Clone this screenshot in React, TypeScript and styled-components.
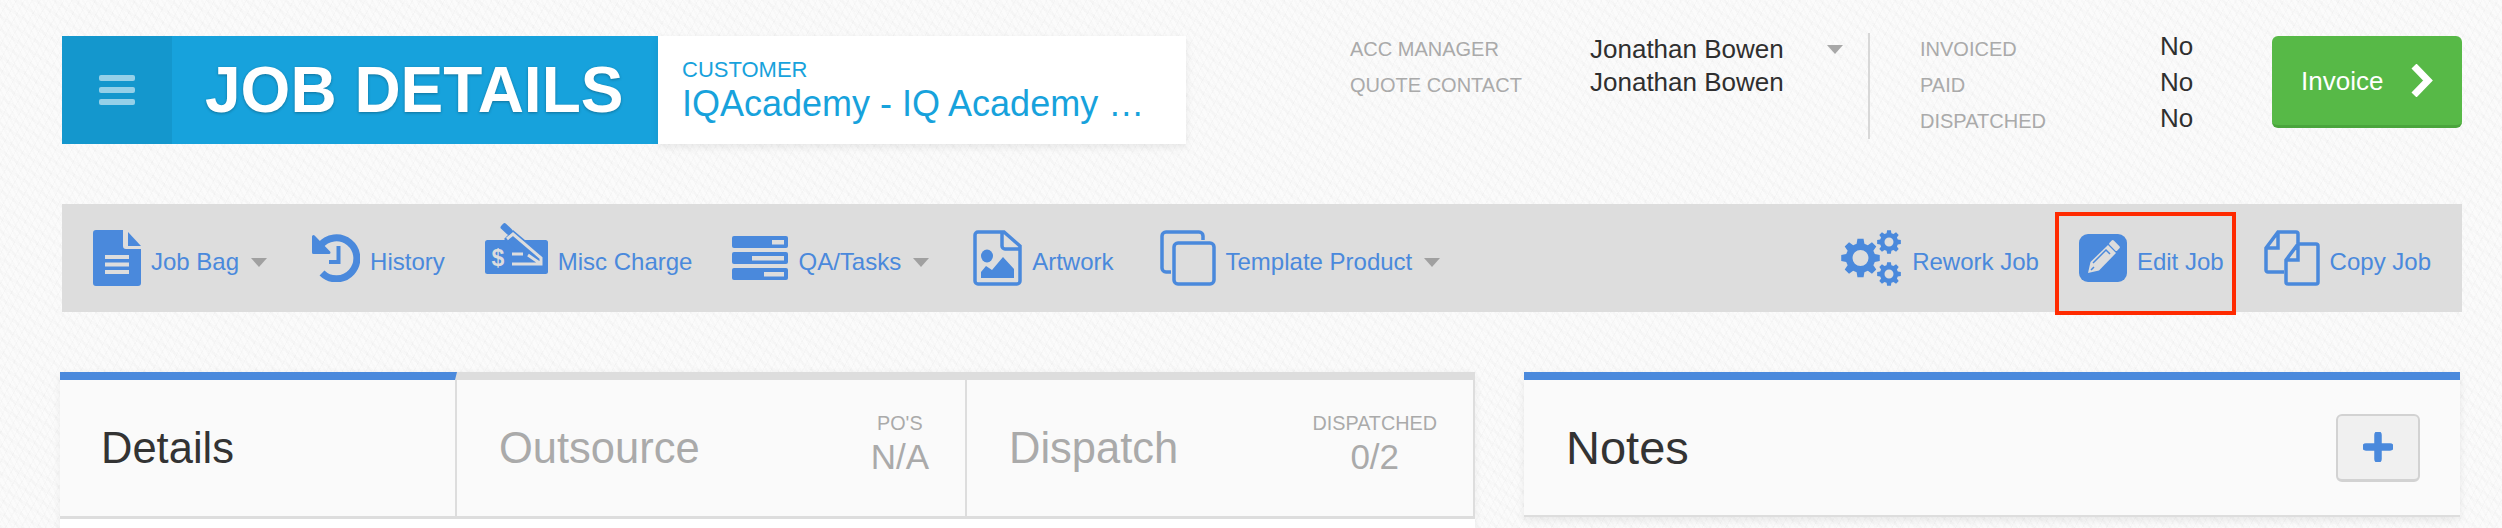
import React from "react";
import styled, { createGlobalStyle } from "styled-components";

const BLUE = "#4a89dc";
const GREY = "#dddddd";

const GlobalStyle = createGlobalStyle`
  html, body {
    margin: 0;
    padding: 0;
    overflow: hidden;
  }
  body {
    font-family: "Liberation Sans", Arial, sans-serif;
    background-color: #fbfbfb;
    background-image:
      repeating-linear-gradient(62deg, rgba(0,0,0,0.012) 0 2px, transparent 2px 5px),
      repeating-linear-gradient(118deg, rgba(0,0,0,0.014) 0 1px, transparent 1px 7px),
      repeating-linear-gradient(35deg, rgba(0,0,0,0.01) 0 3px, transparent 3px 11px);
  }
`;

// gear outline as a polygon plus a hole, for the rework icon
const gearPath = (cx: number, cy: number, r: number, hole: number, teeth: number) => {
  const inner = r * 0.76;
  const pts: string[] = [];
  const step = (Math.PI * 2) / teeth;
  for (let i = 0; i < teeth; i++) {
    const a = i * step - Math.PI / 2;
    const corners: [number, number][] = [
      [inner, a - step * 0.34],
      [r, a - step * 0.2],
      [r, a + step * 0.2],
      [inner, a + step * 0.34],
    ];
    corners.forEach(([rad, ang]) => {
      pts.push(`${(cx + rad * Math.cos(ang)).toFixed(2)} ${(cy + rad * Math.sin(ang)).toFixed(2)}`);
    });
  }
  const ring = `M${cx - hole} ${cy}a${hole} ${hole} 0 1 0 ${hole * 2} 0a${hole} ${hole} 0 1 0 ${-hole * 2} 0Z`;
  return `M${pts.join("L")}Z${ring}`;
};

const JobBagIcon = () => (
  <svg width="48" height="56" viewBox="0 0 48 56">
    <path
      fill={BLUE}
      d="M3 0H30V16a3 3 0 0 0 3 3H48V53a3 3 0 0 1-3 3H3a3 3 0 0 1-3-3V3a3 3 0 0 1 3-3Z"
    />
    <path fill={BLUE} d="M35 2L48 16H35Z" />
    <path fill={GREY} d="M12 25H36V29H12ZM12 32.500H36V36.500H12ZM12 40H36V44H12Z" />
  </svg>
);

const HistoryIcon = () => (
  <svg width="48" height="48" viewBox="0 0 48 48">
    <path d="M8 12A20.500 20.500 0 1 1 10 39" fill="none" stroke={BLUE} strokeWidth="7" />
    <path d="M1.500 2.500V18.500H17Z" fill={BLUE} stroke={BLUE} strokeWidth="3" strokeLinejoin="round" />
    <path d="M26.500 12V28H17" fill="none" stroke={BLUE} strokeWidth="4" />
  </svg>
);

const MiscChargeIcon = () => (
  <RaisedSvg width="63" height="51" viewBox="0 0 63 51">
    <rect x="0" y="17" width="63" height="34" rx="2.500" fill={BLUE} />
    <path d="M19 16L28 7L60 34V44H48Z" fill={BLUE} />
    <path d="M22 16L28 11L56 35V41H27M27 31H38M43 32L56 41" fill="none" stroke={GREY} strokeWidth="3" />
    <rect x="15.500" y="2.500" width="12" height="7" rx="2" fill={BLUE} transform="rotate(43 21.500 6)" />
    <DollarSign x="13" y="43" textAnchor="middle">
      $
    </DollarSign>
  </RaisedSvg>
);

const TasksIcon = () => (
  <svg width="56" height="44" viewBox="0 0 56 44">
    <rect x="0" y="0" width="56" height="12" rx="2" fill={BLUE} />
    <rect x="0" y="16" width="56" height="12" rx="2" fill={BLUE} />
    <rect x="0" y="32" width="56" height="12" rx="2" fill={BLUE} />
    <path fill={GREY} d="M40 4H52V8.500H40ZM20 20H52V24.500H20ZM32 36H52V40.500H32Z" />
  </svg>
);

const ArtworkIcon = () => (
  <svg width="49" height="56" viewBox="0 0 49 56">
    <path
      d="M5 2H31L47 16V51a3 3 0 0 1-3 3H5a3 3 0 0 1-3-3V5a3 3 0 0 1 3-3ZM29 2V16a3 3 0 0 0 3 3H47"
      fill="none"
      stroke={BLUE}
      strokeWidth="3.500"
    />
    <ellipse cx="14" cy="26" rx="6" ry="6.500" fill={BLUE} />
    <path fill={BLUE} d="M8 48V42L13 36L19 40L30 27L41 39V48Z" />
  </svg>
);

const TemplateIcon = () => (
  <svg width="56" height="56" viewBox="0 0 56 56">
    <path
      d="M43 10V6a4 4 0 0 0-4-4H6a4 4 0 0 0-4 4V38a4 4 0 0 0 4 4H11"
      fill="none"
      stroke={BLUE}
      strokeWidth="3.500"
    />
    <rect x="14" y="13" width="40" height="41" rx="4" fill="none" stroke={BLUE} strokeWidth="3.500" />
  </svg>
);

const ReworkIcon = () => (
  <svg width="61" height="56" viewBox="0 0 61 56">
    <path fillRule="evenodd" fill={BLUE} d={gearPath(19.500, 28, 19.500, 8, 8)} />
    <path fillRule="evenodd" fill={BLUE} d={gearPath(48, 12, 12, 4.500, 8)} />
    <path fillRule="evenodd" fill={BLUE} d={gearPath(48, 44, 12, 4.500, 8)} />
  </svg>
);

const EditIcon = () => (
  <svg width="48" height="48" viewBox="0 0 48 48">
    <rect width="48" height="48" rx="9" fill={BLUE} />
    <path d="M9 39L11.500 28L29 11L37 19L20 36.500Z" fill={GREY} />
    <path d="M14 29L27 16L31 20M12 36L15 33" fill="none" stroke={BLUE} strokeWidth="1.500" />
    <rect x="30" y="8.500" width="11" height="6" rx="1.500" fill={GREY} transform="rotate(45 35.500 11.500)" />
  </svg>
);

const CopyIcon = () => (
  <svg width="56" height="56" viewBox="0 0 56 56">
    <path
      d="M20 42H4a2 2 0 0 1-2-2V18L14 2H32a2 2 0 0 1 2 2V13M14 2V18H2"
      fill="none"
      stroke={BLUE}
      strokeWidth="3.500"
    />
    <path
      d="M34 14H52a2 2 0 0 1 2 2V52a2 2 0 0 1-2 2H24a2 2 0 0 1-2-2V30ZM34 14V30H22"
      fill="none"
      stroke={BLUE}
      strokeWidth="3.500"
    />
  </svg>
);

const App = () => {
  return (
    <Page>
      <GlobalStyle />
      <Header>
        <TitleBlock>
          <MenuToggle>
            <MenuBar />
            <MenuBar />
            <MenuBar />
          </MenuToggle>
          <Title>JOB DETAILS</Title>
        </TitleBlock>
        <CustomerBox>
          <CustomerLabel>CUSTOMER</CustomerLabel>
          <CustomerName>IQAcademy - IQ Academy Pty Ltd</CustomerName>
        </CustomerBox>
        <Contacts>
          <MetaLabel>ACC MANAGER</MetaLabel>
          <MetaValue>
            Jonathan Bowen
            <HeaderCaret />
          </MetaValue>
          <MetaLabel>QUOTE CONTACT</MetaLabel>
          <MetaValue $lift={3}>Jonathan Bowen</MetaValue>
        </Contacts>
        <Status>
          <MetaLabel>INVOICED</MetaLabel>
          <MetaValue $lift={3}>No</MetaValue>
          <MetaLabel>PAID</MetaLabel>
          <MetaValue $lift={3}>No</MetaValue>
          <MetaLabel>DISPATCHED</MetaLabel>
          <MetaValue $lift={3}>No</MetaValue>
        </Status>
        <InvoiceButton>
          <InvoiceLabel>Invoice</InvoiceLabel>
          <svg width="24" height="33" viewBox="0 0 24 33">
            <path d="M4 2L18 16.500L4 31" fill="none" stroke="#fff" strokeWidth="7" />
          </svg>
        </InvoiceButton>
      </Header>

      <Toolbar>
        <NavItem $offset={31}>
          <JobBagIcon />
          <NavLabel>Job Bag</NavLabel>
          <Caret />
        </NavItem>
        <NavItem $offset={45}>
          <HistoryIcon />
          <NavLabel>History</NavLabel>
        </NavItem>
        <NavItem $offset={40}>
          <MiscChargeIcon />
          <NavLabel>Misc Charge</NavLabel>
        </NavItem>
        <NavItem $offset={40}>
          <TasksIcon />
          <NavLabel>QA/Tasks</NavLabel>
          <Caret />
        </NavItem>
        <NavItem $offset={44}>
          <ArtworkIcon />
          <NavLabel>Artwork</NavLabel>
        </NavItem>
        <NavItem $offset={46}>
          <TemplateIcon />
          <NavLabel>Template Product</NavLabel>
          <Caret />
        </NavItem>
        <Spacer />
        <NavItem>
          <ReworkIcon />
          <NavLabel>Rework Job</NavLabel>
        </NavItem>
        <NavItem $offset={40}>
          <EditIcon />
          <NavLabel>Edit Job</NavLabel>
        </NavItem>
        <NavItem $offset={40}>
          <CopyIcon />
          <NavLabel>Copy Job</NavLabel>
        </NavItem>
        <Highlight />
      </Toolbar>

      <Cards>
        <TabsCard>
          <TabStrip>
            <Tab $active $width={397}>
              <TabTitle $active>Details</TabTitle>
            </Tab>
            <Tab $width={510}>
              <TabTitle>Outsource</TabTitle>
              <TabStat>
                <TabStatLabel>PO'S</TabStatLabel>
                <TabStatValue>N/A</TabStatValue>
              </TabStat>
            </Tab>
            <Tab $width={508}>
              <TabTitle>Dispatch</TabTitle>
              <TabStat>
                <TabStatLabel>DISPATCHED</TabStatLabel>
                <TabStatValue>0/2</TabStatValue>
              </TabStat>
            </Tab>
          </TabStrip>
        </TabsCard>
        <NotesCard>
          <NotesTitle>Notes</NotesTitle>
          <AddButton>
            <svg width="30" height="30" viewBox="0 0 30 30">
              <path d="M15 3V27M3 15H27" fill="none" stroke={BLUE} strokeWidth="7.500" strokeLinecap="round" />
            </svg>
          </AddButton>
        </NotesCard>
      </Cards>
    </Page>
  );
};

export default App;

const Page = styled.div`
  width: 2502px;
  height: 528px;
  box-sizing: border-box;
  padding: 36px 40px 0 60px;
  overflow: hidden;
`;
const Header = styled.div`
  display: flex;
  align-items: flex-start;
  margin-left: 2px;
  height: 108px;
`;
const TitleBlock = styled.div`
  display: flex;
  align-items: stretch;
  width: 596px;
  height: 108px;
  background: #17a2dc;
`;
const MenuToggle = styled.div`
  width: 110px;
  background: #1497cd;
  display: flex;
  flex-direction: column;
  justify-content: center;
  align-items: center;
  gap: 6px;
`;
const MenuBar = styled.span`
  display: block;
  width: 36px;
  height: 6px;
  border-radius: 2px;
  background: rgba(255, 255, 255, 0.55);
`;
const Title = styled.div`
  margin-left: 33px;
  font-size: 64px;
  line-height: 108px;
  font-weight: 700;
  color: #fff;
  white-space: nowrap;
  text-shadow: 0 1px 3px rgba(0, 0, 0, 0.3);
`;
const CustomerBox = styled.div`
  width: 528px;
  height: 108px;
  box-sizing: border-box;
  padding: 22px 40px 0 24px;
  background: #fff;
  box-shadow: 0 3px 8px rgba(0, 0, 0, 0.08);
  color: #17a2dc;
`;
const CustomerLabel = styled.div`
  font-size: 22px;
  line-height: 24px;
`;
const CustomerName = styled.div`
  font-size: 36px;
  line-height: 44px;
  white-space: nowrap;
  overflow: hidden;
  text-overflow: ellipsis;
`;
const Contacts = styled.div`
  display: grid;
  grid-template-columns: 240px 278px;
  grid-auto-rows: 36px;
  margin-left: 164px;
  margin-top: -3px;
  height: 106px;
  border-right: 2px solid #d8d8d8;
  box-sizing: border-box;
`;
const Status = styled.div`
  display: grid;
  grid-template-columns: 240px 60px;
  grid-auto-rows: 36px;
  margin-left: 50px;
  margin-top: -3px;
`;
const MetaLabel = styled.div`
  font-size: 20px;
  line-height: 32px;
  color: #aaaaaa;
  white-space: nowrap;
`;
const MetaValue = styled.div<{ $lift?: number }>`
  position: relative;
  margin-top: ${(p) => -(p.$lift ?? 0)}px;
  font-size: 26px;
  line-height: 32px;
  color: #2f2f2f;
  white-space: nowrap;
`;
const HeaderCaret = styled.span`
  position: absolute;
  right: 0;
  top: 12px;
  margin-right: 25px;
  border-left: 8px solid transparent;
  border-right: 8px solid transparent;
  border-top: 9px solid #a8a8a8;
`;
const InvoiceButton = styled.div`
  width: 190px;
  height: 92px;
  margin-left: auto;
  box-sizing: border-box;
  padding: 0 28px 0 29px;
  display: flex;
  align-items: center;
  justify-content: space-between;
  background: #57b947;
  border-bottom: 3px solid #4aa53c;
  border-radius: 6px;
  color: #fff;
  font-size: 26px;
`;
const InvoiceLabel = styled.span`
  margin-top: 2px;
`;
const Toolbar = styled.div`
  position: relative;
  display: flex;
  align-items: center;
  height: 108px;
  margin: 60px 0 0 2px;
  padding-right: 31px;
  background: ${GREY};
`;
const NavItem = styled.div<{ $offset?: number }>`
  display: flex;
  align-items: center;
  gap: 10px;
  margin-left: ${(p) => p.$offset ?? 0}px;
  font-size: 24px;
  color: ${BLUE};
  white-space: nowrap;
`;
const NavLabel = styled.span`
  margin-top: 8px;
`;
const RaisedSvg = styled.svg`
  margin-top: -19px;
`;
const Caret = styled.span`
  margin-left: 2px;
  margin-top: 9px;
  border-left: 8px solid transparent;
  border-right: 8px solid transparent;
  border-top: 9px solid #a0a0a0;
`;
const Spacer = styled.div`
  flex: 1;
`;
const Highlight = styled.div`
  position: absolute;
  left: 1993px;
  top: 8px;
  width: 181px;
  height: 103px;
  box-sizing: border-box;
  border: 4px solid #ff2a00;
`;
const DollarSign = styled.text`
  font-family: "Liberation Sans", Arial, sans-serif;
  font-size: 23px;
  font-weight: 700;
  fill: ${GREY};
`;
const Cards = styled.div`
  display: flex;
  align-items: flex-start;
  justify-content: space-between;
  margin-top: 60px;
`;
const TabsCard = styled.div`
  width: 1415px;
  height: 200px;
  background: #fff;
  box-shadow: 0 2px 8px rgba(0, 0, 0, 0.06);
`;
const TabStrip = styled.div`
  display: flex;
  box-sizing: border-box;
  height: 147px;
  border-bottom: 3px solid ${GREY};
`;
const Tab = styled.div<{ $active?: boolean; $width: number }>`
  width: ${(p) => p.$width}px;
  box-sizing: border-box;
  display: flex;
  align-items: center;
  justify-content: space-between;
  padding: 0 36px 0 ${(p) => (p.$active ? 41 : 42)}px;
  background: #fafafa;
  border-top: 8px solid ${(p) => (p.$active ? BLUE : GREY)};
  border-right: 2px solid ${GREY};
`;
const TabTitle = styled.div<{ $active?: boolean }>`
  font-size: 43.500px;
  color: ${(p) => (p.$active ? "#333333" : "#aaaaaa")};
`;
const TabStat = styled.div`
  display: flex;
  flex-direction: column;
  align-items: center;
  margin-top: -6px;
  color: #aaaaaa;
`;
const TabStatLabel = styled.div`
  font-size: 19.800px;
  line-height: 24px;
`;
const TabStatValue = styled.div`
  font-size: 35px;
  line-height: 44px;
`;
const NotesCard = styled.div`
  width: 936px;
  height: 145px;
  margin-right: 2px;
  box-sizing: border-box;
  display: flex;
  align-items: center;
  justify-content: space-between;
  padding: 0 40px 0 42px;
  background: #fafafa;
  border-top: 8px solid ${BLUE};
  border-bottom: 2px solid ${GREY};
  box-shadow: 0 3px 8px rgba(0, 0, 0, 0.08);
`;
const NotesTitle = styled.div`
  font-size: 47px;
  color: #333333;
`;
const AddButton = styled.div`
  width: 84px;
  height: 68px;
  box-sizing: border-box;
  display: flex;
  align-items: center;
  justify-content: center;
  background: #f0f0f0;
  border: 2px solid #d2d2d2;
  border-bottom-width: 3px;
  border-radius: 6px;
`;
